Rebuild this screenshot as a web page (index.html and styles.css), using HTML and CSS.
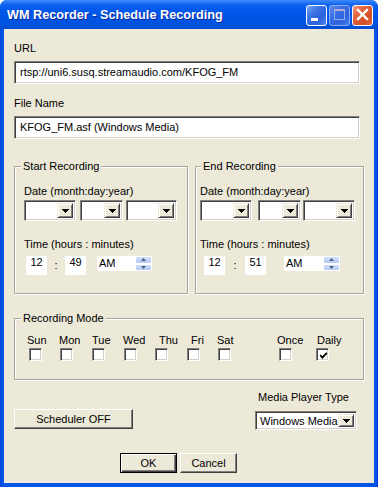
FILE: index.html
```html
<!DOCTYPE html>
<html>
<head>
<meta charset="utf-8">
<title>WM Recorder - Schedule Recording</title>
<link rel="stylesheet" href="styles.css">
</head>
<body>
<div class="window">
  <div class="titlebar">
    <span class="title">WM Recorder - Schedule Recording</span>
    <div class="tbtns">
      <span class="tbtn tb-min"><svg width="19" height="19" viewBox="0 0 19 19"><rect x="4" y="12" width="7" height="3" fill="#fff"/></svg></span>
      <span class="tbtn tb-max"><svg width="19" height="19" viewBox="0 0 19 19"><rect x="4.5" y="3.5" width="10" height="10" fill="none" stroke="#93AEEF" stroke-width="1"/><rect x="4" y="3" width="11" height="2" fill="#B6A7D9"/></svg></span>
      <span class="tbtn tb-close"><svg width="19" height="19" viewBox="0 0 19 19"><path d="M5 4L14 13M14 4L5 13" stroke="#fff" stroke-width="2.4" stroke-linecap="square"/></svg></span>
    </div>
  </div>
  <div class="client">
    <div class="lbl">URL</div>
    <div class="field">rtsp://uni6.susq.streamaudio.com/KFOG_FM</div>
    <div class="lbl lbl-file">File Name</div>
    <div class="field">KFOG_FM.asf (Windows Media)</div>

    <div class="groups">
      <fieldset class="group g-start">
        <legend>Start Recording</legend>
        <div class="lbl">Date (month:day:year)</div>
        <div class="combos c-start">
          <div class="combo cw1"><span class="drop"><svg width="7" height="4" viewBox="0 0 7 4"><path d="M0 0h7v1h-1v1h-1v1h-1v1h-1v-1h-1v-1h-1v-1h-1z"/></svg></span></div>
          <div class="combo cw2"><span class="drop"><svg width="7" height="4" viewBox="0 0 7 4"><path d="M0 0h7v1h-1v1h-1v1h-1v1h-1v-1h-1v-1h-1v-1h-1z"/></svg></span></div>
          <div class="combo cw3"><span class="drop"><svg width="7" height="4" viewBox="0 0 7 4"><path d="M0 0h7v1h-1v1h-1v1h-1v1h-1v-1h-1v-1h-1v-1h-1z"/></svg></span></div>
        </div>
        <div class="lbl lbl-time">Time (hours : minutes)</div>
        <div class="timerow t-start">
          <span class="tbox">12</span>
          <span class="colon">:</span>
          <span class="tbox">49</span>
          <span class="spin">
            <span class="spinval">AM</span>
            <span class="spinbtns">
              <span class="sb"><svg width="5" height="3" viewBox="0 0 5 3"><path d="M2.5 0L5 3H0z" fill="#4D6185"/></svg></span>
              <span class="sb"><svg width="5" height="3" viewBox="0 0 5 3"><path d="M0 0h5L2.5 3z" fill="#4D6185"/></svg></span>
            </span>
          </span>
        </div>
      </fieldset>

      <fieldset class="group g-end">
        <legend>End Recording</legend>
        <div class="lbl">Date (month:day:year)</div>
        <div class="combos c-end">
          <div class="combo cw1"><span class="drop"><svg width="7" height="4" viewBox="0 0 7 4"><path d="M0 0h7v1h-1v1h-1v1h-1v1h-1v-1h-1v-1h-1v-1h-1z"/></svg></span></div>
          <div class="combo cw2"><span class="drop"><svg width="7" height="4" viewBox="0 0 7 4"><path d="M0 0h7v1h-1v1h-1v1h-1v1h-1v-1h-1v-1h-1v-1h-1z"/></svg></span></div>
          <div class="combo cw3e"><span class="drop"><svg width="7" height="4" viewBox="0 0 7 4"><path d="M0 0h7v1h-1v1h-1v1h-1v1h-1v-1h-1v-1h-1v-1h-1z"/></svg></span></div>
        </div>
        <div class="lbl lbl-time">Time (hours : minutes)</div>
        <div class="timerow t-end">
          <span class="tbox">12</span>
          <span class="colon">:</span>
          <span class="tbox">51</span>
          <span class="spin">
            <span class="spinval">AM</span>
            <span class="spinbtns">
              <span class="sb"><svg width="5" height="3" viewBox="0 0 5 3"><path d="M2.5 0L5 3H0z" fill="#4D6185"/></svg></span>
              <span class="sb"><svg width="5" height="3" viewBox="0 0 5 3"><path d="M0 0h5L2.5 3z" fill="#4D6185"/></svg></span>
            </span>
          </span>
        </div>
      </fieldset>
    </div>

    <fieldset class="group g-mode">
      <legend>Recording Mode</legend>
      <div class="dayrow day-labels">
        <span>Sun</span><span>Mon</span><span>Tue</span><span>Wed</span><span>Thu</span><span>Fri</span><span>Sat</span><span>Once</span><span>Daily</span>
      </div>
      <div class="dayrow day-checks">
        <span class="cell"><span class="chk"></span></span>
        <span class="cell"><span class="chk"></span></span>
        <span class="cell"><span class="chk"></span></span>
        <span class="cell"><span class="chk"></span></span>
        <span class="cell"><span class="chk"></span></span>
        <span class="cell"><span class="chk"></span></span>
        <span class="cell"><span class="chk"></span></span>
        <span class="cell"><span class="chk"></span></span>
        <span class="cell"><span class="chk checked"><svg width="9" height="9" viewBox="0 0 9 9"><path d="M1.2 4.2L3.4 6.6L7.8 1.8" fill="none" stroke="#000" stroke-width="1.8"/></svg></span></span>
      </div>
    </fieldset>

    <div class="bottomrow">
      <span class="btn btn-sched">Scheduler OFF</span>
      <div class="mediacol">
        <div class="lbl lbl-media">Media Player Type</div>
        <div class="combo combo-media"><span class="comboval">Windows Media</span><span class="drop"><svg width="7" height="4" viewBox="0 0 7 4"><path d="M0 0h7v1h-1v1h-1v1h-1v1h-1v-1h-1v-1h-1v-1h-1z"/></svg></span></div>
      </div>
    </div>

    <div class="okrow">
      <span class="btn btn-default">OK</span>
      <span class="btn">Cancel</span>
    </div>
  </div>
</div>
</body>
</html>
```

FILE: styles.css
```css
* { box-sizing: border-box; margin: 0; padding: 0; }
html, body { background: #fff; }
body {
  width: 378px;
  height: 487px;
  overflow: hidden;
  font-family: "Liberation Sans", Arial, sans-serif;
  font-size: 11px;
  line-height: 13px;
  color: #000;
}

.window {
  width: 378px;
  height: 487px;
  display: flex;
  flex-direction: column;
  border-radius: 7px 7px 0 0;
  overflow: hidden;
  background: linear-gradient(90deg, #0831D9 0, #0455E6 1px, #0455E6 377px, #0831D9 377px);
}

/* title bar */
.titlebar {
  height: 29px;
  flex: none;
  display: flex;
  align-items: center;
  padding: 0 5px 0 7px;
  background: linear-gradient(#3D8DFB 0, #2B78F6 2px, #0C62EF 5px, #0259EC 9px, #0055E4 16px, #0052DE 24px, #004BD3 29px);
}
.title {
  flex: 1;
  padding-top: 2px;
  color: #fff;
  font-weight: bold;
  font-size: 12.7px;
  text-shadow: 1px 1px #0C2A9E;
  white-space: nowrap;
}
.tbtns {
  display: flex;
  gap: 2px;
  margin-top: 2px;
}
.tbtn {
  width: 21px;
  height: 21px;
  border: 1px solid #fff;
  border-radius: 3px;
  display: flex;
}
.tb-min {
  background: linear-gradient(135deg, #7BA7F7 0%, #3C74E6 35%, #2A62DC 65%, #4B83EE 100%);
}
.tb-max {
  border-color: #8DAAF0;
  background: linear-gradient(135deg, #5B8EF0 0%, #356CE3 40%, #2D64DD 70%, #4A80EC 100%);
}
.tb-close {
  background: linear-gradient(135deg, #F19A7C 0%, #E2623B 35%, #D24D22 70%, #DE6A45 100%);
}

/* client area */
.client {
  flex: 1;
  margin: 0 4px 4px;
  background: #ECE9D8;
  padding: 13px 0 0 10px;
  display: flex;
  flex-direction: column;
  align-items: flex-start;
}
.lbl {
  height: 13px;
  white-space: nowrap;
}
.lbl-file { margin-top: 13px; }

.field {
  margin-top: 6px;
  width: 346px;
  height: 23px;
  background: #fff;
  border: 1px solid;
  border-color: #808080 #fff #fff #808080;
  box-shadow: inset 1px 1px #404040, inset -1px -1px #D4D0C8;
  padding: 0 5px;
  line-height: 21px;
  white-space: nowrap;
  overflow: hidden;
}

/* group boxes */
.groups {
  display: flex;
  gap: 7px;
  margin-top: 21px;
}
.group {
  border: 1px solid #A9A697;
  box-shadow: inset 1px 1px #fff, 1px 1px #fff;
  min-width: 0;
}
.group legend {
  line-height: 13px;
  padding: 0 2px;
  background: #ECE9D8;
  white-space: nowrap;
}
.g-start {
  width: 174px;
  height: 134px;
  padding: 12px 0 0 9px;
}
.g-start legend { margin-left: -3px; }
.g-end {
  width: 169px;
  height: 134px;
  padding: 12px 0 0 4px;
}
.g-end legend { margin-left: 1px; }

.combos {
  display: flex;
  margin-top: 2px;
}
.c-start .cw2 { margin-left: 4px; }
.c-start .cw3 { margin-left: 3px; }
.c-end .cw2 { margin-left: 6px; }
.c-end .cw3e { margin-left: 2px; }
.combo {
  height: 21px;
  background: #fff;
  border: 1px solid;
  border-color: #808080 #fff #fff #808080;
  box-shadow: inset 1px 1px #404040, inset -1px -1px #D4D0C8;
  padding: 2px;
  display: flex;
  justify-content: flex-end;
}
.cw1 { width: 52px; }
.cw2 { width: 43px; }
.cw3 { width: 51px; }
.cw3e { width: 52px; }
.drop {
  width: 16px;
  flex: none;
  background: #ECE9D8;
  border: 1px solid;
  border-color: #ECE9D8 #404040 #404040 #ECE9D8;
  box-shadow: inset 1px 1px #fff, inset -1px -1px #808080;
  display: flex;
  align-items: center;
  justify-content: center;
}
.drop svg { display: block; fill: #000; }

.lbl-time { margin-top: 17px; }
.timerow {
  display: flex;
  align-items: flex-start;
  margin-top: 5px;
}
.tbox {
  width: 21px;
  height: 19px;
  background: #fff;
  text-align: center;
  line-height: 13px;
}
.colon {
  line-height: 19px;
  text-align: center;
}
.t-start { margin-left: 2px; }
.t-start .colon { width: 18px; }
.t-start .spin { margin-left: 11px; }
.t-end { margin-left: 4px; }
.t-end .colon { width: 20px; }
.t-end .spin { margin-left: 18px; width: 56px; }

.spin {
  width: 55px;
  height: 15px;
  background: #fff;
  display: flex;
}
.spinval {
  flex: 1;
  padding-left: 2px;
  line-height: 15px;
}
.spinbtns {
  width: 17px;
  display: flex;
  flex-direction: column;
}
.sb {
  flex: 1;
  border: 1px solid #fff;
  border-radius: 2px;
  background: linear-gradient(#D3E0FC, #B5C9F7);
  display: flex;
  align-items: center;
  justify-content: center;
}
.sb svg { display: block; }

/* recording mode */
.g-mode {
  margin-top: 18px;
  width: 350px;
  height: 68px;
  padding: 9px 0 0 12px;
}
.g-mode legend { margin-left: -6px; }
.dayrow { display: flex; }
.day-labels span { height: 13px; white-space: nowrap; }
.day-labels span:nth-child(1) { width: 32px; }
.day-labels span:nth-child(2) { width: 33px; }
.day-labels span:nth-child(3) { width: 31px; }
.day-labels span:nth-child(4) { width: 36px; }
.day-labels span:nth-child(5) { width: 32px; }
.day-labels span:nth-child(6) { width: 26px; }
.day-labels span:nth-child(7) { width: 60px; }
.day-labels span:nth-child(8) { width: 40px; }
.day-checks { margin: 1px 0 0 2px; }
.day-checks .cell { display: block; }
.day-checks .cell:nth-child(1) { width: 31px; }
.day-checks .cell:nth-child(2) { width: 32px; }
.day-checks .cell:nth-child(3) { width: 32px; }
.day-checks .cell:nth-child(4) { width: 31px; }
.day-checks .cell:nth-child(5) { width: 32px; }
.day-checks .cell:nth-child(6) { width: 31px; }
.day-checks .cell:nth-child(7) { width: 61px; }
.day-checks .cell:nth-child(8) { width: 37px; }
.chk {
  display: flex;
  width: 13px;
  height: 13px;
  background: #fff;
  border: 1px solid;
  border-color: #808080 #fff #fff #808080;
  box-shadow: inset 1px 1px #404040, inset -1px -1px #D4D0C8;
  align-items: center;
  justify-content: center;
}
.chk svg { display: block; margin: 1px 0 0 1px; }

/* bottom */
.bottomrow {
  align-self: stretch;
  display: flex;
  justify-content: space-between;
  margin-top: 11px;
  padding-right: 17px;
}
.btn {
  display: flex;
  align-items: center;
  justify-content: center;
  width: 57px;
  height: 20px;
  background: #ECE9D8;
  border: 1px solid;
  border-color: #fff #404040 #404040 #fff;
  box-shadow: inset -1px -1px #808080, inset 1px 1px #ECE9D8;
  white-space: nowrap;
}
.btn-sched {
  width: 119px;
  margin-top: 18px;
}
.btn-default {
  border-color: #000;
  box-shadow: inset 1px 1px #fff, inset -1px -1px #404040, inset -2px -2px #808080;
}
.mediacol {
  display: flex;
  flex-direction: column;
  align-items: flex-start;
}
.lbl-media { margin-left: 3px; }
.combo-media {
  margin-top: 7px;
  width: 102px;
  height: 19px;
  border-color: #808080 #fff #fff #808080;
  justify-content: space-between;
}
.comboval {
  padding-left: 2px;
  line-height: 15px;
  white-space: nowrap;
  overflow: hidden;
}

.okrow {
  display: flex;
  gap: 3px;
  margin-top: 23px;
  padding-left: 106px;
}
```
